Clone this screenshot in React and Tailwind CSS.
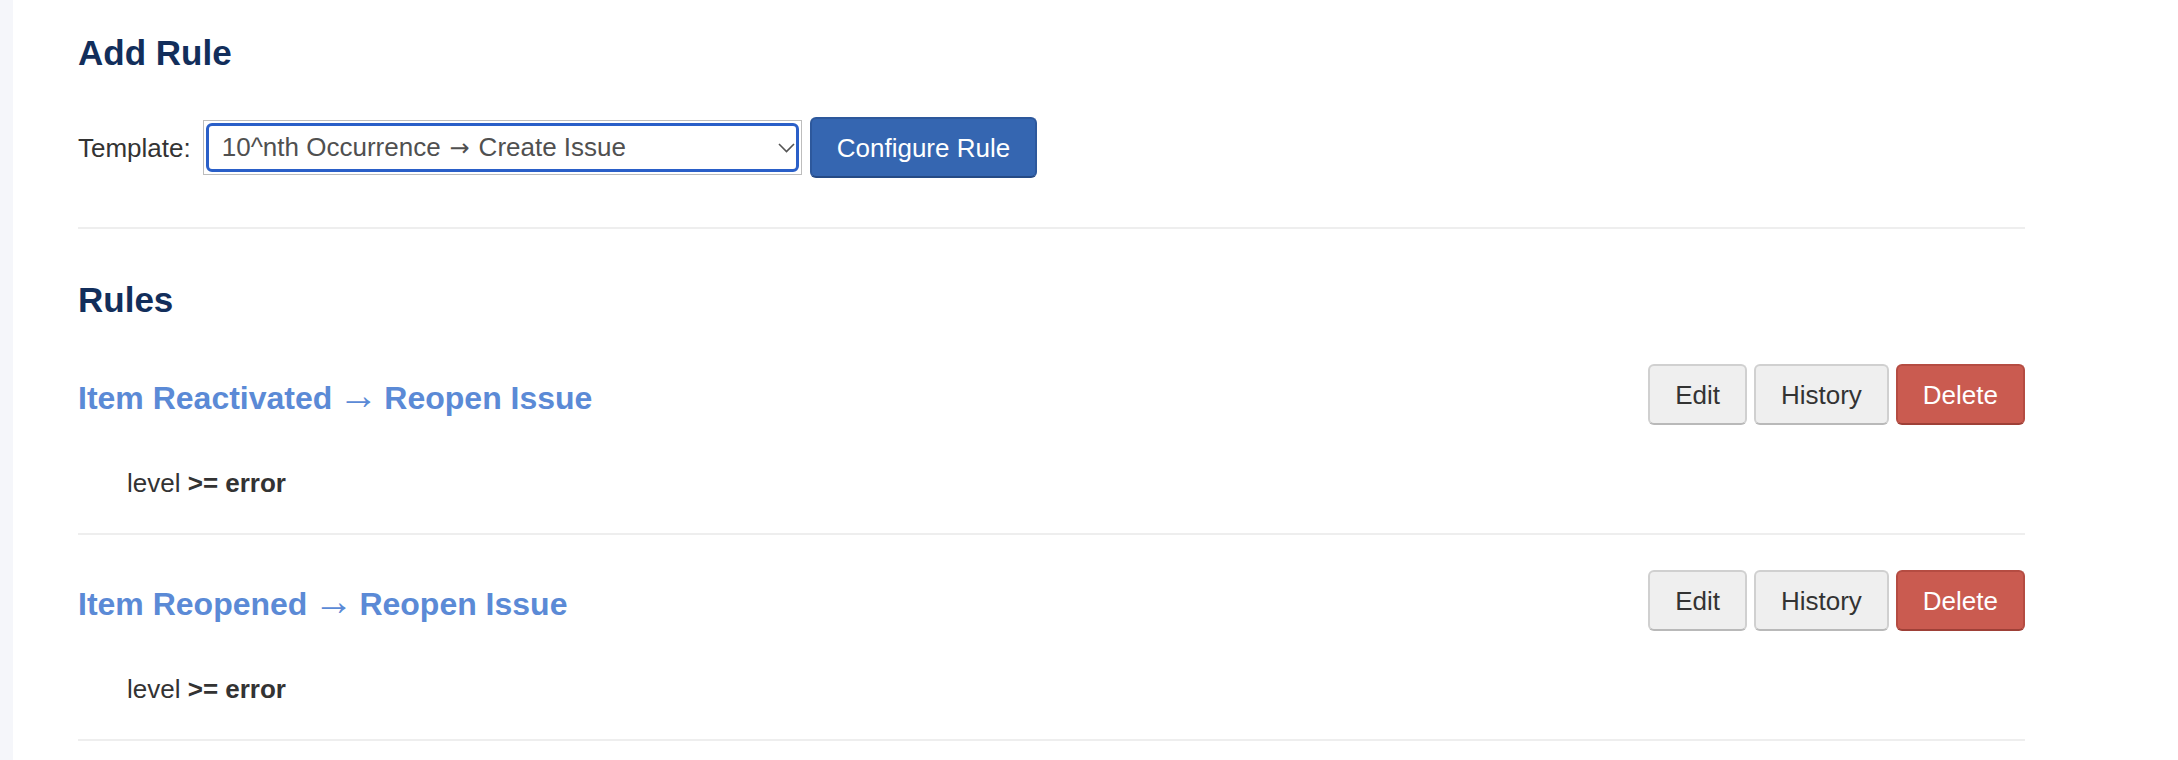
import React from 'react';

const rules = [
    { title: 'Item Reactivated', action: 'Reopen Issue' },
    { title: 'Item Reopened', action: 'Reopen Issue' },
];

function Button({ children, variant = 'default' }) {
    const styles = {
        default: 'bg-[#efefef] border-[#d0d0d0] border-b-[#b9b9b9] text-[#333333]',
        primary: 'bg-[#3566b1] border-[#2d589c] border-b-[#254a85] text-white',
        danger: 'bg-[#ca5b50] border-[#b54c42] border-b-[#9e4037] text-white',
    };
    return (
        <button className={`h-[61px] px-[25px] rounded-[6px] border-2 text-[26px] leading-none ${styles[variant]}`}>
            {children}
        </button>
    );
}

export default function App() {
    return (
        <div className="flex min-h-[760px] bg-white font-['Liberation_Sans',Arial,sans-serif]">
            <div className="w-[13px] shrink-0 bg-[#f5f6fa]" />
            <div className="ml-[65px] w-[1947px] pt-[35px]">
                <h2 className="text-[35px] leading-none font-bold text-[#122e5b]">Add Rule</h2>

                <div className="mt-[47px] flex items-center">
                    <span className="text-[26px] leading-none text-[#333333] mr-[12px]">Template:</span>
                    <div className="w-[599px] h-[55px] border border-[#bdbdbd] p-[2px]">
                        <div className="h-full rounded-[6px] border-[3px] border-[#2a5fc8] flex items-center justify-between pl-[13px] pr-[1px]">
                            <span className="text-[26px] leading-none text-[#505050] whitespace-nowrap">
                                10^nth Occurrence<span className="inline-block w-[38px] leading-[26px] text-center font-['DejaVu_Sans',sans-serif] text-[24px]">→</span>Create Issue
                            </span>
                            <svg width="17" height="10" viewBox="0 0 17 10" fill="none" stroke="#555555" strokeWidth="1.6">
                                <path d="M1 1l7.5 7.5L16 1" />
                            </svg>
                        </div>
                    </div>
                    <div className="ml-[8px]">
                        <Button variant="primary">Configure Rule</Button>
                    </div>
                </div>

                <div className="mt-[49px] h-[2px] bg-[#eeeeee]" />

                <h2 className="mt-[53px] text-[35px] leading-none font-bold text-[#122e5b]">Rules</h2>

                {rules.map((rule, i) => (
                    <div key={rule.title}>
                        <div className={`${i === 0 ? 'mt-[47px]' : 'mt-[35px]'} flex items-start justify-between`}>
                            <a className="mt-[16px] text-[32px] leading-none font-bold text-[#5b8ad6] whitespace-nowrap">
                                {rule.title}<span className="inline-block w-[52px] leading-[32px] text-center font-['Roboto',sans-serif] font-black text-[40px]">→</span>{rule.action}
                            </a>
                            <div className="flex gap-[7px]">
                                <Button>Edit</Button>
                                <Button>History</Button>
                                <Button variant="danger">Delete</Button>
                            </div>
                        </div>
                        <p className="mt-[45px] ml-[49px] text-[26px] leading-none text-[#333333]">
                            level <span className="font-bold">&gt;= error</span>
                        </p>
                        <div className="mt-[37px] h-[2px] bg-[#eeeeee]" />
                    </div>
                ))}
            </div>
        </div>
    );
}
